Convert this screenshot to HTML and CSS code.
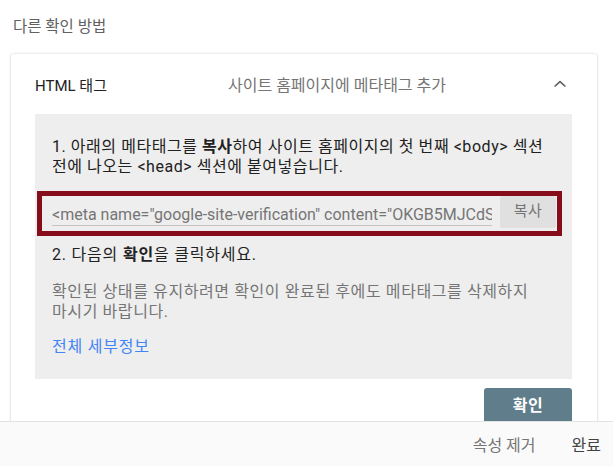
FILE: index.html
```html
<!DOCTYPE html>
<html lang="ko">
<head>
<meta charset="utf-8">
<title>다른 확인 방법</title>
<link rel="stylesheet" href="styles.css">
</head>
<body>
<div class="page">
  <h2 class="section-title">다른 확인 방법</h2>
  <div class="card">
    <div class="card-header">
      <div class="card-name">HTML 태그</div>
      <div class="card-desc">사이트 홈페이지에 메타태그 추가</div>
      <svg class="chevron" width="24" height="24" viewBox="0 0 24 24" aria-hidden="true">
        <path d="M12 8.6l-6 5.4 1.2 1.1L12 10.8l4.8 4.3L18 14z" fill="#616161"/>
      </svg>
    </div>
    <div class="panel">
      <p class="step">1. 아래의 메타태그를 <b>복사</b>하여 사이트 홈페이지의 첫 번째 &lt;body&gt; 섹션 전에 나오는 &lt;head&gt; 섹션에 붙여넣습니다.</p>
      <div class="copy-row">
        <div class="code-field">&lt;meta name="google-site-verification" content="OKGB5MJCdSx0q9vZ3kYp" /&gt;</div>
        <button class="copy-btn">복사</button>
      </div>
      <p class="step step2">2. 다음의 <b>확인</b>을 클릭하세요.</p>
      <p class="note">확인된 상태를 유지하려면 확인이 완료된 후에도 메타태그를 삭제하지 마시기 바랍니다.</p>
      <a class="details" href="#">전체 세부정보</a>
    </div>
    <div class="actions">
      <button class="verify-btn">확인</button>
    </div>
  </div>
</div>
<div class="footer">
  <button class="footer-btn muted">속성 제거</button>
  <button class="footer-btn">완료</button>
</div>
</body>
</html>
```

FILE: styles.css
```css
html, body {
  margin: 0;
  padding: 0;
  background: #ffffff;
  overflow: hidden;
  height: 466px;
}
body {
  font-family: Roboto, "Noto Sans CJK KR", sans-serif;
  color: #212121;
  word-break: keep-all;
}
.page {
  padding: 17px 16px 0 11px;
}
.section-title {
  margin: 0 0 17px 2px;
  font-size: 15.5px;
  line-height: 20px;
  font-weight: 400;
  color: #616161;
}
.card {
  background: #fff;
  border-radius: 3px;
  box-shadow: 0 0 3px rgba(0,0,0,0.18), 0 1px 2px rgba(0,0,0,0.08);
  min-height: 460px;
}
.card-header {
  display: flex;
  align-items: center;
  height: 60px;
  padding: 0 25px 0 24px;
}
.card-name {
  width: 193px;
  font-size: 15px;
  color: #212121;
}
.card-desc {
  flex: 1;
  font-size: 16px;
  color: #757575;
}
.chevron {
  display: block;
  flex: none;
}
.panel {
  margin: 0 25px 0 24px;
  background: #eeeeee;
  padding: 23px 17px 22px 17px;
  display: flex;
  flex-direction: column;
}
.step {
  margin: 0;
  font-size: 16px;
  line-height: 20px;
  letter-spacing: 0.55px;
  color: #212121;
}
.step b {
  font-weight: 700;
}
.copy-row {
  display: flex;
  align-items: flex-start;
  gap: 8px;
  margin: 14px -7px 0 -15px;
  border: 5px solid #880d1a;
  height: 35px;
  padding: 0 1px 0 10px;
}
.code-field {
  flex: 1;
  min-width: 0;
  margin-top: 9px;
  height: 20px;
  line-height: 20px;
  font-size: 16px;
  color: #757575;
  white-space: nowrap;
  overflow: hidden;
  border-bottom: 1px solid #c4c4c4;
}
.copy-btn {
  flex: none;
  width: 56px;
  height: 32px;
  border: none;
  border-radius: 3px;
  background: #e0e0e0;
  color: #757575;
  font-family: Roboto, "Noto Sans CJK KR", sans-serif;
  font-size: 15px;
  letter-spacing: 0.5px;
  padding: 0 0 5px 0;
}
.step2 {
  margin-top: 9px;
  letter-spacing: 0.8px;
}
.note {
  margin: 17px 0 0 0;
  font-size: 16px;
  line-height: 20px;
  letter-spacing: 0.6px;
  color: #757575;
}
.details {
  margin-top: 15px;
  font-size: 16px;
  line-height: 20px;
  letter-spacing: 0.8px;
  color: #4285f4;
  text-decoration: none;
  align-self: flex-start;
}
.actions {
  display: flex;
  justify-content: flex-end;
  padding: 9px 25px 0 0;
}
.verify-btn {
  width: 88px;
  height: 36px;
  border: none;
  border-radius: 3px;
  background: #607d8b;
  color: #ffffff;
  font-family: Roboto, "Noto Sans CJK KR", sans-serif;
  font-size: 16px;
  font-weight: 700;
  letter-spacing: 0.5px;
  padding: 0 0 4px 0;
}
.footer {
  position: fixed;
  left: 0;
  right: 0;
  bottom: 0;
  height: 44px;
  background: #fafafa;
  border-top: 1px solid #e3e3e3;
  display: flex;
  justify-content: flex-end;
  align-items: center;
  gap: 36px;
  padding-right: 12px;
}
.footer-btn {
  border: none;
  background: transparent;
  padding: 0;
  font-family: Roboto, "Noto Sans CJK KR", sans-serif;
  font-size: 16px;
  line-height: 20px;
  color: #424242;
  margin-top: 3px;
}
.footer-btn.muted {
  color: #757575;
}
```
